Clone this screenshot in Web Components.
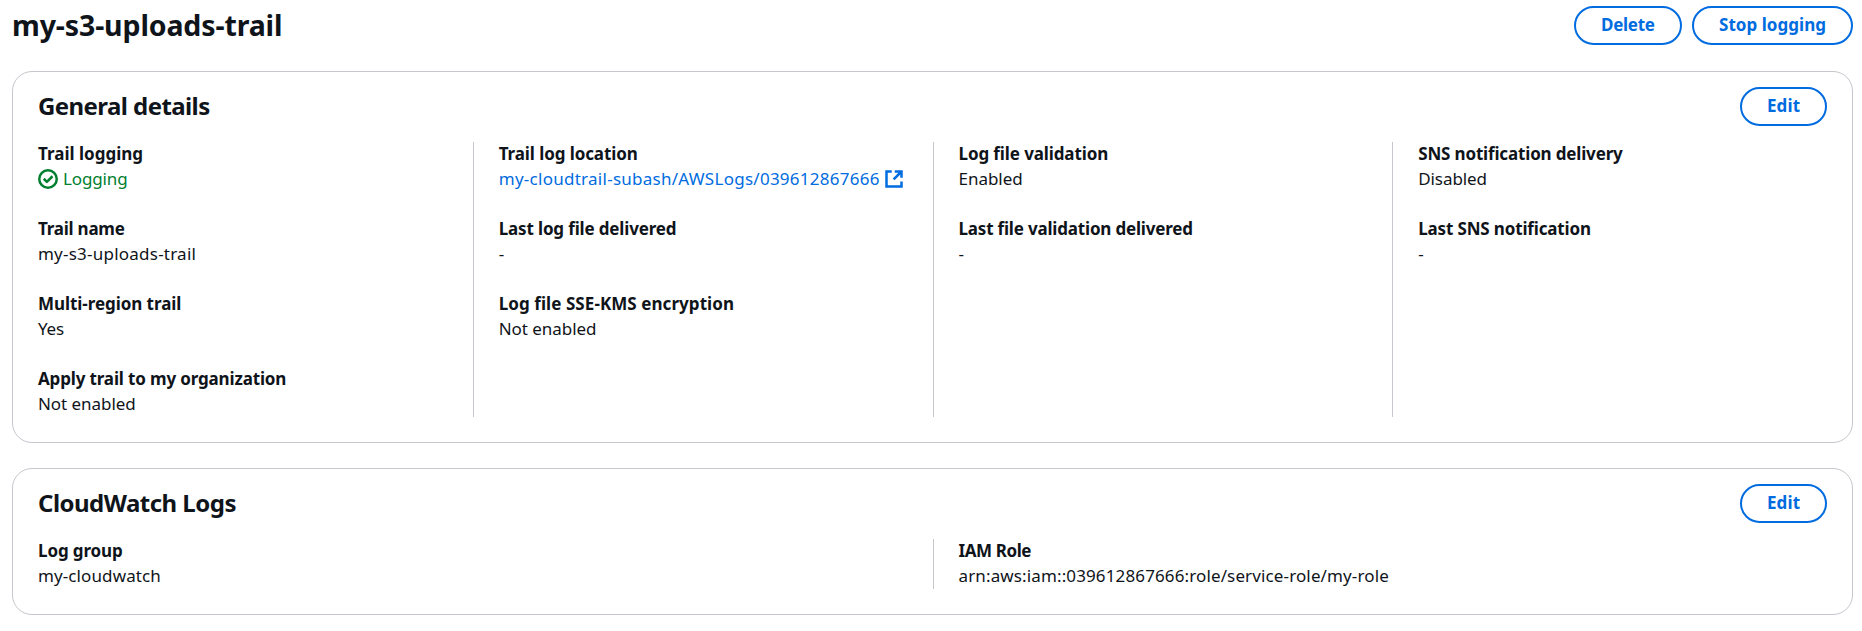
<!DOCTYPE html>
<html lang="en">
<head>
<meta charset="utf-8">
<title>my-s3-uploads-trail</title>
<style>
  html, body { margin: 0; height: 631px; overflow: hidden; background: #fff; }
  body { font-family: "Noto Sans", "Open Sans", sans-serif; color: #0f141a; }
</style>
</head>
<body>
<trail-page></trail-page>
<script>
const define = (name, css, html, setup) => customElements.define(name, class extends HTMLElement {
  constructor() {
    super();
    this.attachShadow({ mode: 'open' }).innerHTML = `<style>${css}</style>${html}`;
  }
  connectedCallback() { if (setup) setup(this); }
});

/* One line of text tracked so that its ink spans the "w" pixels given. */
const pen = document.createElement('canvas').getContext('2d');
define('fit-text', ':host{display:inline-block;white-space:nowrap}', '<slot></slot>', el => {
  const cs = getComputedStyle(el), text = el.textContent, w = +el.getAttribute('w');
  if (!w || text.length < 2) return;
  pen.font = `${cs.fontWeight} ${cs.fontSize} ${cs.fontFamily}`;
  const m = pen.measureText(text);
  const ink = m.actualBoundingBoxRight + m.actualBoundingBoxLeft;
  const ls = (w - ink) / (text.length - 1);
  el.style.letterSpacing = ls.toFixed(3) + 'px';
  el.style.marginRight = (-ls).toFixed(3) + 'px';
});

define('pill-button', `
  :host{display:block}
  button{box-sizing:border-box;display:flex;align-items:center;justify-content:center;width:100%;height:39px;
    margin:0;padding:0 0 2px;border:2px solid #006ce0;border-radius:20px;background:#fff;color:#006ce0;
    font:700 17px/25px "Noto Sans","Open Sans",sans-serif}`,
  '<button type="button"><slot></slot></button>');

define('detail-card', `
  :host{display:block;box-sizing:border-box;border:1px solid #c6c6cd;border-radius:20px;background:#fff}
  header{display:flex;justify-content:space-between;align-items:flex-start;padding:15px 25px 0;height:55px}
  h2{margin:4px 0 0;font-size:24px;line-height:30px;font-weight:700}
  section{display:grid;grid-auto-flow:column;grid-auto-columns:1fr;padding-bottom:25px}`,
  '<header><h2><slot name="title"></slot></h2><slot name="action"></slot></header><section><slot></slot></section>');

define('detail-column', `
  :host{display:flex;flex-direction:column;gap:25px;padding-left:25px;border-left:1px solid #c6c6cd;min-width:0}
  :host([first]){border-left:0}`, '<slot></slot>');

define('detail-item', `
  :host{display:block;font-size:17px;line-height:23px}
  dl,dt,dd{margin:0}
  dt,dd{height:25px;display:flex;align-items:flex-start}
  dt{font-weight:700}`,
  '<dl><dt><slot name="label"></slot></dt><dd><slot></slot></dd></dl>');

define('status-ok', `
  :host{display:flex;align-items:flex-start;gap:5px;color:#00802f}
  svg{width:20px;height:20px;margin-top:2px;fill:none;stroke:currentColor;stroke-width:2}`,
  '<svg viewBox="0 0 16 16"><circle cx="8" cy="8" r="7"/><path d="m4.6 7.8 2.5 2.5 4.5-4.5" stroke-linejoin="round"/></svg><slot></slot>');

define('external-link', `
  :host{display:block}
  a{display:flex;align-items:flex-start;gap:4px;color:#006ce0;text-decoration:none}
  svg{width:20px;height:20px;margin-top:2px;fill:none;stroke:currentColor;stroke-width:2}`,
  '<a href="#"><slot></slot><svg viewBox="0 0 16 16"><path d="M8.6 2H14v5M14 2 7.7 8.3M14 10v4H2V2h4.2"/></svg></a>');

define('trail-page', `
  :host{display:flex;flex-direction:column;width:1841px;padding:6px 0 0 12px}
  .top{display:flex;justify-content:space-between;align-items:flex-start;height:65px}
  h1{margin:0;font-size:28.5px;line-height:38px;font-weight:700}
  .actions{display:flex;gap:10px}
  .delete{width:108px}.stop{width:161px}.edit{width:87px}
  .general{height:372px}
  .logs{height:147px;margin-top:25px}`, `
  <div class="top">
    <h1><fit-text w="267">my-s3-uploads-trail</fit-text></h1>
    <div class="actions">
      <pill-button class="delete"><fit-text w="52.7">Delete</fit-text></pill-button>
      <pill-button class="stop"><fit-text w="106.3">Stop logging</fit-text></pill-button>
    </div>
  </div>
  <detail-card class="general">
    <fit-text slot="title" w="171.2">General details</fit-text>
    <pill-button slot="action" class="edit"><fit-text w="31.7">Edit</fit-text></pill-button>
    <detail-column first>
      <detail-item><fit-text slot="label" w="104.3">Trail logging</fit-text><status-ok><fit-text w="63.2">Logging</fit-text></status-ok></detail-item>
      <detail-item><fit-text slot="label" w="86.7">Trail name</fit-text><fit-text w="155.5">my-s3-uploads-trail</fit-text></detail-item>
      <detail-item><fit-text slot="label" w="141.3">Multi-region trail</fit-text><fit-text w="26">Yes</fit-text></detail-item>
      <detail-item><fit-text slot="label" w="247.3">Apply trail to my organization</fit-text><fit-text w="96.3">Not enabled</fit-text></detail-item>
    </detail-column>
    <detail-column>
      <detail-item><fit-text slot="label" w="138">Trail log location</fit-text><external-link><fit-text w="379">my-cloudtrail-subash/AWSLogs/039612867666</fit-text></external-link></detail-item>
      <detail-item><fit-text slot="label" w="176">Last log file delivered</fit-text><fit-text>-</fit-text></detail-item>
      <detail-item><fit-text slot="label" w="233.2">Log file SSE-KMS encryption</fit-text><fit-text w="96.3">Not enabled</fit-text></detail-item>
    </detail-column>
    <detail-column>
      <detail-item><fit-text slot="label" w="147.7">Log file validation</fit-text><fit-text w="62.7">Enabled</fit-text></detail-item>
      <detail-item><fit-text slot="label" w="232.7">Last file validation delivered</fit-text><fit-text>-</fit-text></detail-item>
    </detail-column>
    <detail-column>
      <detail-item><fit-text slot="label" w="204.8">SNS notification delivery</fit-text><fit-text w="67.3">Disabled</fit-text></detail-item>
      <detail-item><fit-text slot="label" w="170.7">Last SNS notification</fit-text><fit-text>-</fit-text></detail-item>
    </detail-column>
  </detail-card>
  <detail-card class="logs">
    <fit-text slot="title" w="197.4">CloudWatch Logs</fit-text>
    <pill-button slot="action" class="edit"><fit-text w="31.7">Edit</fit-text></pill-button>
    <detail-column first>
      <detail-item><fit-text slot="label" w="83">Log group</fit-text><fit-text w="121.3">my-cloudwatch</fit-text></detail-item>
    </detail-column>
    <detail-column>
      <detail-item><fit-text slot="label" w="72.8">IAM Role</fit-text><fit-text w="429.7">arn:aws:iam::039612867666:role/service-role/my-role</fit-text></detail-item>
    </detail-column>
  </detail-card>`);
</script>
</body>
</html>
